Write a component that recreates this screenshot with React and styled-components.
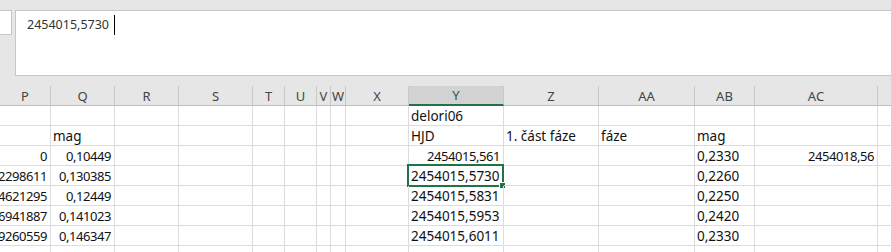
import styled, { createGlobalStyle } from 'styled-components'


const GlobalStyle = createGlobalStyle`
    html, body {
        margin: 0;
        padding: 0;
        background: #e6e6e6;
    }
    body {
        font-family: "Noto Sans", "Open Sans", sans-serif;
        overflow: hidden;
    }
`

const GREEN = `#217346`

// Column letters with pixel widths (right gridline included)
const COLUMNS = [
    { key: `P`, width: 51 },
    { key: `Q`, width: 64 },
    { key: `R`, width: 64 },
    { key: `S`, width: 74 },
    { key: `T`, width: 32 },
    { key: `U`, width: 32 },
    { key: `V`, width: 14 },
    { key: `W`, width: 15 },
    { key: `X`, width: 63 },
    { key: `Y`, width: 95 },
    { key: `Z`, width: 95 },
    { key: `AA`, width: 96 },
    { key: `AB`, width: 60 },
    { key: `AC`, width: 123 },
    { key: `AD`, width: 80 },
]

const SELECTED_COL = `Y`
const SELECTED_ROW = 3

// r = right aligned number, everything else is text and sits left
const ROWS = [
    { Y: `delori06` },
    { Q: `mag`, Y: `HJD`, Z: `1. část fáze`, AA: `fáze`, AB: `mag` },
    { P: [ `0`, `r` ], Q: [ `0,10449`, `r` ], Y: [ `2454015,561`, `r` ], AB: `0,2330`, AC: [ `2454018,56`, `r` ] },
    { P: [ `0,002298611`, `r` ], Q: [ `0,130385`, `r` ], Y: `2454015,5730`, AB: `0,2260` },
    { P: [ `0,004621295`, `r` ], Q: [ `0,12449`, `r` ], Y: `2454015,5831`, AB: `0,2250` },
    { P: [ `0,006941887`, `r` ], Q: [ `0,141023`, `r` ], Y: `2454015,5953`, AB: `0,2420` },
    { P: [ `0,009260559`, `r` ], Q: [ `0,146347`, `r` ], Y: `2454015,6011`, AB: `0,2330` },
    {},
]

const template = COLUMNS.map( c => `${ c.width }px` ).join( ` ` )

const Page = styled.div`
    width: 891px;
    height: 252px;
    overflow: hidden;
    background: #e6e6e6;
`

const FormulaArea = styled.div`
    display: flex;
    gap: 3px;
    padding-top: 10px;
    height: 66px;
    margin-bottom: 10px;
`

const NameBox = styled.div`
    width: 11px;
    height: 23px;
    background: #ffffff;
    border: 1px solid #c6c6c6;
    border-left: none;
`

const FormulaBox = styled.div`
    flex: 1;
    display: flex;
    align-items: flex-start;
    padding: 4px 0 0 11px;
    background: #ffffff;
    border: 1px solid #c6c6c6;
    border-right: none;
    font-size: 12.5px;
    color: #333333;
    line-height: 20px;
`

const Caret = styled.span`
    display: inline-block;
    width: 1px;
    height: 20px;
    margin-left: 5px;
    background: #000000;
`

const Grid = styled.div`
    display: grid;
    grid-template-columns: ${ template };
    grid-auto-rows: 20px;
    background: #ffffff;
`

const HeaderCell = styled.div`
    display: flex;
    align-items: center;
    justify-content: center;
    background: ${ ( { $active } ) => $active ? `#d2d2d2` : `#e6e6e6` };
    border-right: 1px solid #c8c8c8;
    border-bottom: ${ ( { $active } ) => $active ? `2px solid ${ GREEN }` : `1px solid #bdbdbd` };
    color: ${ ( { $active } ) => $active ? `#1d5e3a` : `#444444` };
    font-size: 13px;
    overflow: hidden;
`

const Cell = styled.div`
    position: relative;
    display: flex;
    align-items: center;
    justify-content: ${ ( { $right } ) => $right ? `flex-end` : `flex-start` };
    padding: 0 3px 0 2px;
    border-right: 1px solid #dadcdd;
    border-bottom: 1px solid #dadcdd;
    font-size: ${ ( { $right } ) => $right ? `13px` : `13.5px` };
    letter-spacing: ${ ( { $right } ) => $right ? `-0.45px` : `0` };
    color: #111111;
    white-space: nowrap;
    overflow: ${ ( { $spill } ) => $spill ? `visible` : `hidden` };
`

const Selection = styled.span`
    position: absolute;
    left: -2px;
    top: -2px;
    right: -1px;
    bottom: -2px;
    border: 2px solid ${ GREEN };
    pointer-events: none;

    &::after {
        content: '';
        position: absolute;
        right: -4px;
        bottom: -4px;
        width: 5px;
        height: 5px;
        background: ${ GREEN };
        border: 1px solid #ffffff;
    }
`


export default function App() {

    return <Page>
        <GlobalStyle />
        <FormulaArea>
            <NameBox />
            <FormulaBox>
                2454015,5730
                <Caret />
            </FormulaBox>
        </FormulaArea>
        <Grid>
            { COLUMNS.map( c => <HeaderCell key={ c.key } $active={ c.key === SELECTED_COL }>{ c.key }</HeaderCell> ) }
            { ROWS.map( ( row, r ) => COLUMNS.map( c => {
                const raw = row[ c.key ]
                const [ text, align ] = Array.isArray( raw ) ? raw : [ raw, `l` ]
                const selected = r === SELECTED_ROW && c.key === SELECTED_COL
                return <Cell key={ `${ r }-${ c.key }` } $right={ align === `r` } $spill={ selected }>
                    { text }
                    { selected && <Selection /> }
                </Cell>
            } ) ) }
        </Grid>
    </Page>

}
